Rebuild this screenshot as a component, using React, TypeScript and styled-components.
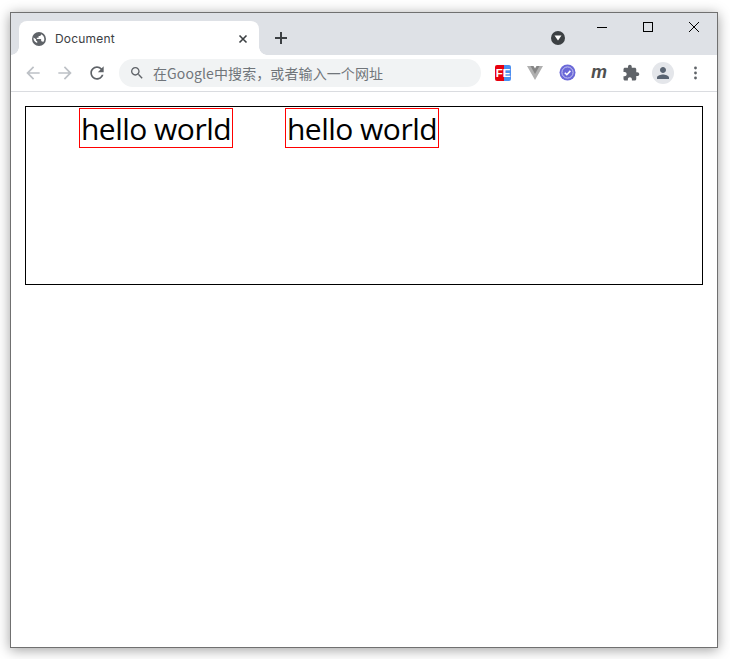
import React from "react";
import styled, { createGlobalStyle } from "styled-components";

const Global = createGlobalStyle`
  html, body { margin: 0; padding: 0; background: #ffffff; }
  body { font-family: "Open Sans", "Noto Sans", sans-serif; }
  #root { width: 730px; height: 659px; overflow: hidden; }
`;

const Page = styled.div`
  box-sizing: border-box;
  width: 730px;
  height: 659px;
  padding: 12px 12px 11px 10px;
`;

const Window = styled.div`
  box-sizing: border-box;
  width: 708px;
  height: 636px;
  border: 1px solid #707070;
  background: #fff;
  box-shadow: 0 2px 12px rgba(0, 0, 0, 0.38);
  display: flex;
  flex-direction: column;
`;

const TitleBar = styled.div`
  height: 42px;
  flex: none;
  background: #dee1e6;
  display: flex;
  align-items: flex-end;
  padding-left: 8px;
`;

const Tab = styled.div`
  position: relative;
  box-sizing: border-box;
  width: 240px;
  height: 34px;
  background: #fff;
  border-radius: 8px 8px 0 0;
  display: flex;
  align-items: center;
  padding: 1px 8px 0 12px;
  &::before, &::after {
    content: "";
    position: absolute;
    bottom: 0;
    width: 8px;
    height: 8px;
  }
  &::before { left: -8px; background: radial-gradient(circle at 0 0, #dee1e6 7.5px, #fff 8px); }
  &::after { right: -8px; background: radial-gradient(circle at 100% 0, #dee1e6 7.5px, #fff 8px); }
`;

const TabTitle = styled.span`
  flex: 1;
  margin-left: 8px;
  font: 12px/16px "Inter", "Open Sans", sans-serif;
  letter-spacing: 0.2px;
  color: #3c4043;
`;

const Svg = styled.svg<{ $size: number; $color?: string }>`
  width: ${(p) => p.$size}px;
  height: ${(p) => p.$size}px;
  flex: none;
  display: block;
  fill: ${(p) => p.$color ?? "#5f6368"};
`;

const NewTab = styled.div`
  width: 28px;
  height: 34px;
  margin-left: 8px;
  display: flex;
  align-items: center;
  justify-content: center;
`;

const Spacer = styled.div`
  flex: 1;
`;

const ProfileDot = styled.div`
  width: 14px;
  height: 14px;
  margin: 0 14px 10px 0;
  border-radius: 50%;
  background: #3c4043;
  display: flex;
  align-items: center;
  justify-content: center;
`;

const Controls = styled.div`
  align-self: flex-start;
  display: flex;
`;

const Control = styled.div`
  width: 46px;
  height: 28px;
  display: flex;
  align-items: center;
  justify-content: center;
`;

const Toolbar = styled.div`
  box-sizing: border-box;
  height: 37px;
  flex: none;
  border-bottom: 1px solid #dadce0;
  display: flex;
  align-items: center;
  padding: 0 6px 1px 6px;
`;

const IconButton = styled.div`
  width: 32px;
  height: 28px;
  flex: none;
  display: flex;
  align-items: center;
  justify-content: center;
`;

const Omnibox = styled.div`
  box-sizing: border-box;
  width: 362px;
  height: 28px;
  margin: 0 6px;
  border-radius: 14px;
  background: #f1f3f4;
  display: flex;
  align-items: center;
  padding-left: 10px;
  gap: 8px;
`;

const OmniText = styled.span`
  font: 14px/18px "Noto Sans CJK SC", "Noto Sans", sans-serif;
  letter-spacing: 0.1px;
  color: #70757a;
`;

const FeBadge = styled.div`
  width: 16px;
  height: 16px;
  border-radius: 2px;
  background: linear-gradient(90deg, #e8000d 0 56%, #4a90f0 56% 100%);
  color: #fff;
  font: 700 11.5px/16px "Liberation Sans", sans-serif;
  letter-spacing: -0.2px;
  text-align: center;
`;

const Meth = styled.span`
  font: italic 700 18px/20px "Liberation Sans", sans-serif;
  color: #505050;
  margin-top: -1px;
`;

const Avatar = styled.div`
  width: 22px;
  height: 22px;
  border-radius: 50%;
  background: #e4e6ea;
  display: flex;
  align-items: center;
  justify-content: center;
`;

const Content = styled.main`
  flex: 1;
  padding: 14px;
`;

const Box = styled.div`
  box-sizing: border-box;
  width: 678px;
  height: 179px;
  border: 1px solid #000;
  display: flex;
  align-items: flex-start;
  padding: 1px 0 0 53px;
  gap: 52px;
`;

const Hello = styled.span`
  box-sizing: border-box;
  width: 154px;
  height: 40px;
  border: 1px solid #ff0000;
  font: 30px/39px "Open Sans", "Noto Sans", sans-serif;
  letter-spacing: -0.5px;
  color: #000;
  white-space: nowrap;
  text-align: center;
`;

export default function App() {
  return (
    <>
      <Global />
      <Page>
        <Window>
          <TitleBar>
            <Tab>
              <Svg $size={16} viewBox="0 0 16 16" $color="#5f6368">
                <path fillRule="evenodd" d="M8 1a7 7 0 1 0 0 14A7 7 0 0 0 8 1zM2.6 6.6 5 8.2v.9c0 .7.5 1.2 1.2 1.2v1.8c-2-.7-3.7-2.6-3.7-4.6 0-.3 0-.6.1-.9zM12 11.2c-.2-.5-.6-.9-1.2-.9h-.6V8.6c0-.3-.3-.6-.6-.6H5.8V6.8H7c.3 0 .6-.3.6-.6V5h1.2c.7 0 1.2-.5 1.2-1.2v-.5c2 .8 3.3 2.5 3.3 4.7 0 1.3-.5 2.4-1.3 3.2z" />
              </Svg>
              <TabTitle>Document</TabTitle>
              <Svg $size={16} viewBox="0 0 16 16">
                <path d="M4.5 4.5 11.5 11.5M11.5 4.5 4.5 11.5" stroke="#3c4043" strokeWidth="1.6" fill="none" />
              </Svg>
            </Tab>
            <NewTab>
              <Svg $size={16} viewBox="0 0 16 16">
                <path d="M8 2v12M2 8h12" stroke="#3c4043" strokeWidth="2" fill="none" />
              </Svg>
            </NewTab>
            <Spacer />
            <ProfileDot>
              <Svg $size={8} viewBox="0 0 8 8" $color="#fff">
                <path d="M0.5 1.5h7L4 6.5z" />
              </Svg>
            </ProfileDot>
            <Controls>
              <Control>
                <Svg $size={10} viewBox="0 0 10 10">
                  <path d="M0 5.5h10" stroke="#000" strokeWidth="1" fill="none" />
                </Svg>
              </Control>
              <Control>
                <Svg $size={10} viewBox="0 0 10 10">
                  <rect x="0.5" y="0.5" width="9" height="9" stroke="#000" strokeWidth="1" fill="none" />
                </Svg>
              </Control>
              <Control>
                <Svg $size={10} viewBox="0 0 10 10">
                  <path d="M0 0l10 10M10 0L0 10" stroke="#000" strokeWidth="1" fill="none" />
                </Svg>
              </Control>
            </Controls>
          </TitleBar>
          <Toolbar>
            <IconButton>
              <Svg $size={20} viewBox="0 0 24 24" $color="#bdc1c6">
                <path d="M20 11H7.83l5.59-5.59L12 4l-8 8 8 8 1.41-1.41L7.83 13H20v-2z" />
              </Svg>
            </IconButton>
            <IconButton>
              <Svg $size={20} viewBox="0 0 24 24" $color="#bdc1c6">
                <path d="M12 4l-1.41 1.41L16.17 11H4v2h12.17l-5.58 5.59L12 20l8-8z" />
              </Svg>
            </IconButton>
            <IconButton>
              <Svg $size={20} viewBox="0 0 24 24">
                <path d="M17.65 6.35C16.2 4.9 14.21 4 12 4c-4.42 0-7.99 3.58-7.99 8s3.57 8 7.99 8c3.73 0 6.84-2.55 7.73-6h-2.08c-.82 2.33-3.04 4-5.65 4-3.31 0-6-2.69-6-6s2.69-6 6-6c1.66 0 3.14.69 4.22 1.78L13 11h7V4l-2.35 2.35z" />
              </Svg>
            </IconButton>
            <Omnibox>
              <Svg $size={16} viewBox="0 0 24 24">
                <path d="M15.5 14h-.79l-.28-.27C15.41 12.59 16 11.11 16 9.5 16 5.91 13.09 3 9.5 3S3 5.91 3 9.5 5.91 16 9.5 16c1.61 0 3.09-.59 4.23-1.57l.27.28v.79l5 4.99L20.49 19l-4.99-5zm-6 0C7.01 14 5 11.99 5 9.5S7.01 5 9.5 5 14 7.01 14 9.5 11.99 14 9.5 14z" />
              </Svg>
              <OmniText>在Google中搜索，或者输入一个网址</OmniText>
            </Omnibox>
            <IconButton>
              <FeBadge>FE</FeBadge>
            </IconButton>
            <IconButton>
              <Svg $size={18} viewBox="0 0 18 18">
                <path d="M1 2h5l3 5 3-5h5L9 16z" fill="#b0b0b0" />
                <path d="M4.5 2H7.5L9 4.6 10.5 2h3L9 10z" fill="#858585" />
              </Svg>
            </IconButton>
            <IconButton>
              <Svg $size={17} viewBox="0 0 17 17">
                <circle cx="8.5" cy="8.5" r="8" fill="#6a68d8" />
                <circle cx="8.5" cy="8.5" r="5.6" fill="none" stroke="#c8c8f2" strokeWidth="1" />
                <path d="M5.8 8.7l2 2 3.6-3.8" fill="none" stroke="#fff" strokeWidth="1.6" />
              </Svg>
            </IconButton>
            <IconButton>
              <Meth>m</Meth>
            </IconButton>
            <IconButton>
              <Svg $size={18} viewBox="0 0 24 24">
                <path d="M20.5 11H19V7c0-1.1-.9-2-2-2h-4V3.5C13 2.12 11.88 1 10.5 1S8 2.12 8 3.5V5H4c-1.1 0-1.99.9-1.99 2v3.8H3.5c1.49 0 2.7 1.21 2.7 2.7s-1.21 2.7-2.7 2.7H2V20c0 1.1.9 2 2 2h3.8v-1.5c0-1.49 1.21-2.7 2.7-2.7 1.49 0 2.7 1.21 2.7 2.7V22H17c1.1 0 2-.9 2-2v-4h1.5c1.38 0 2.5-1.12 2.5-2.5S21.88 11 20.5 11z" />
              </Svg>
            </IconButton>
            <IconButton>
              <Avatar>
                <Svg $size={18} viewBox="0 0 24 24" $color="#5a6472">
                  <path d="M12 12c2.21 0 4-1.79 4-4s-1.79-4-4-4-4 1.79-4 4 1.79 4 4 4zm0 2c-2.67 0-8 1.34-8 4v2h16v-2c0-2.66-5.33-4-8-4z" />
                </Svg>
              </Avatar>
            </IconButton>
            <IconButton>
              <Svg $size={16} viewBox="0 0 16 16">
                <circle cx="8.5" cy="3" r="1.4" />
                <circle cx="8.5" cy="8" r="1.4" />
                <circle cx="8.5" cy="13" r="1.4" />
              </Svg>
            </IconButton>
          </Toolbar>
          <Content>
            <Box>
              <Hello>hello world</Hello>
              <Hello>hello world</Hello>
            </Box>
          </Content>
        </Window>
      </Page>
    </>
  );
}
